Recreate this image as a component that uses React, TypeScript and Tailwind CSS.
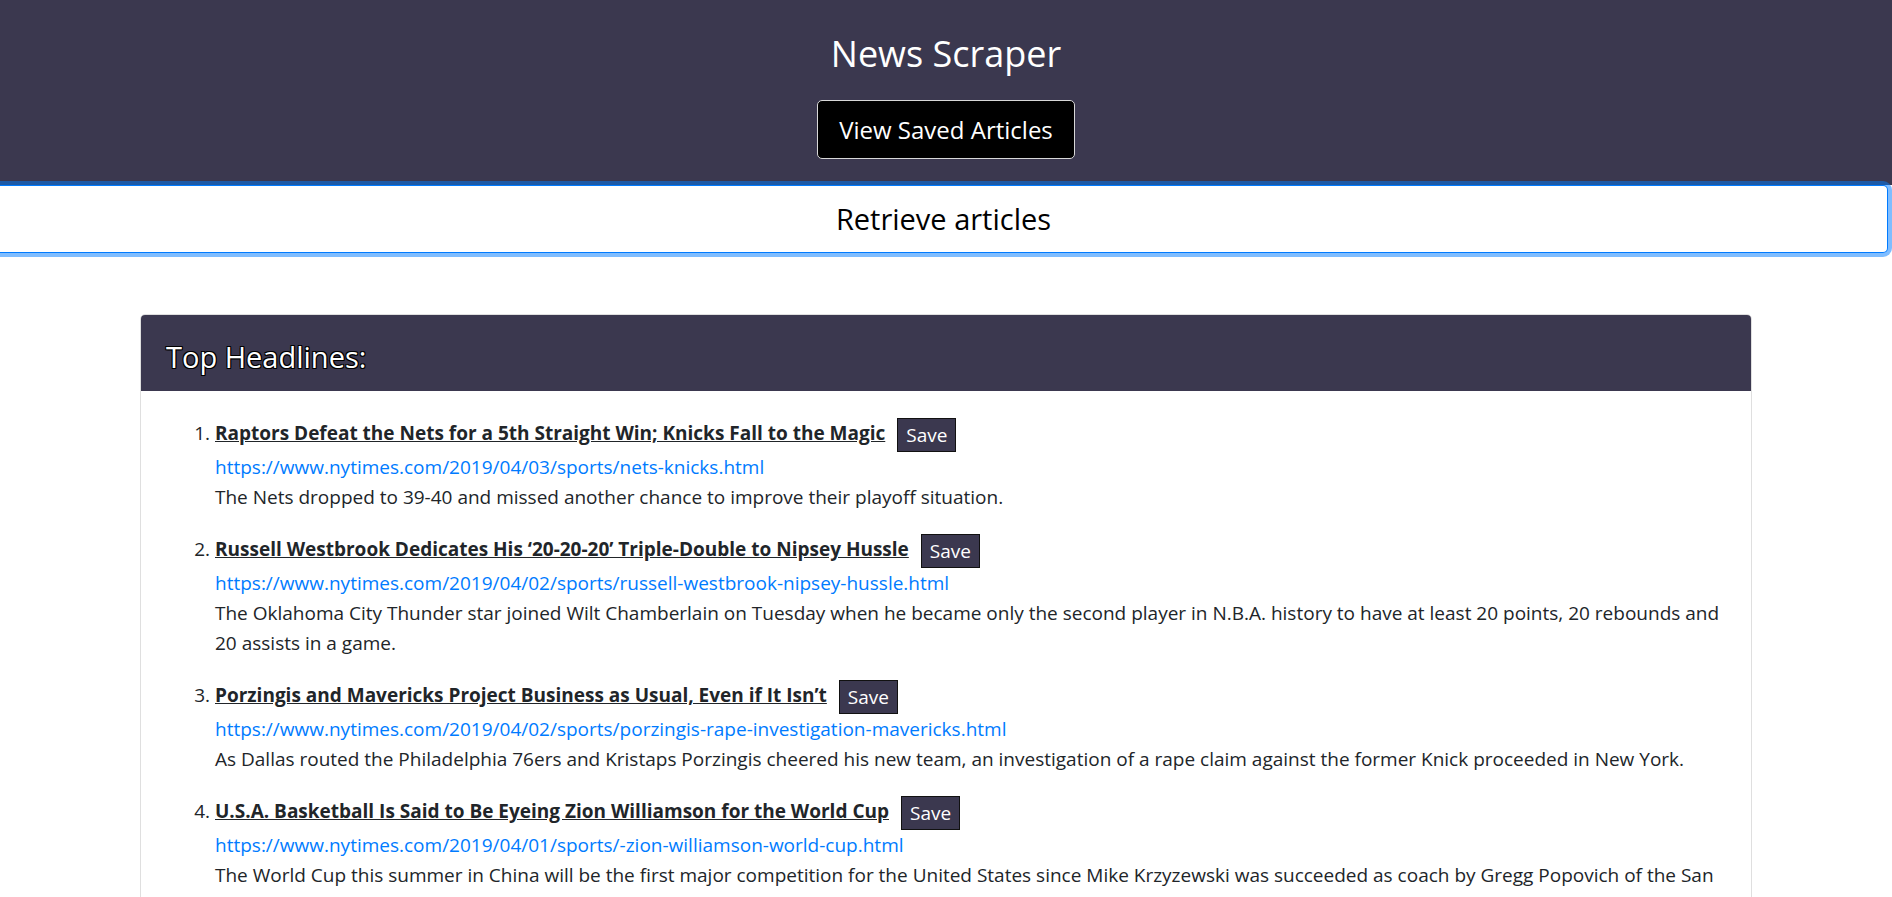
import React from "react";

const articles = [
  {
    title: "Raptors Defeat the Nets for a 5th Straight Win; Knicks Fall to the Magic",
    url: "https://www.nytimes.com/2019/04/03/sports/nets-knicks.html",
    desc: "The Nets dropped to 39-40 and missed another chance to improve their playoff situation.",
  },
  {
    title: "Russell Westbrook Dedicates His ‘20-20-20’ Triple-Double to Nipsey Hussle",
    url: "https://www.nytimes.com/2019/04/02/sports/russell-westbrook-nipsey-hussle.html",
    desc: "The Oklahoma City Thunder star joined Wilt Chamberlain on Tuesday when he became only the second player in N.B.A. history to have at least 20 points, 20 rebounds and 20 assists in a game.",
  },
  {
    title: "Porzingis and Mavericks Project Business as Usual, Even if It Isn’t",
    url: "https://www.nytimes.com/2019/04/02/sports/porzingis-rape-investigation-mavericks.html",
    desc: "As Dallas routed the Philadelphia 76ers and Kristaps Porzingis cheered his new team, an investigation of a rape claim against the former Knick proceeded in New York.",
  },
  {
    title: "U.S.A. Basketball Is Said to Be Eyeing Zion Williamson for the World Cup",
    url: "https://www.nytimes.com/2019/04/01/sports/-zion-williamson-world-cup.html",
    desc: "The World Cup this summer in China will be the first major competition for the United States since Mike Krzyzewski was succeeded as coach by Gregg Popovich of the San Antonio Spurs.",
  },
  {
    title: "Kevin Durant Is Making His Case, One Game at a Time",
    url: "https://www.nytimes.com/2019/04/01/sports/kevin-durant-warriors.html",
    desc: "The Warriors star has been at his best lately, and he knows it.",
  },
];

export default function App() {
  return (
    <div
      className="min-h-screen bg-white overflow-x-hidden text-[#212529]"
      style={{ fontFamily: '"Open Sans", "Noto Sans", sans-serif' }}
    >
      <header className="bg-[#3b384f] h-[185px] flex flex-col items-center pt-[29px]">
        <h1 className="text-white text-[36px] leading-[50px] font-normal">News Scraper</h1>
        <button className="mt-[21px] h-[59px] px-[21px] bg-black text-white text-[24px] border border-[#d8d8d8] rounded-[5px]">
          View Saved Articles
        </button>
      </header>

      <div className="pr-[4px]">
        <button className="w-full h-[68px] bg-white border-y border-r border-[#007bff] rounded-r-[5px] text-black text-[29px] flex items-center justify-center shadow-[0_0_0_4px_rgba(0,123,255,0.5)]">
          Retrieve articles
        </button>
      </div>

      <div className="w-[1612px] mx-auto mt-[61px] border border-[#dfdfdf] rounded-[5px] overflow-hidden">
        <div className="bg-[#3b384f] h-[76px] flex items-center px-[25px] pt-[6px]">
          <h3 className="text-white text-[29px] leading-none [text-shadow:1px_1px_0_#000,-1px_-1px_0_#000,1px_-1px_0_#000,-1px_1px_0_#000,0_1px_0_#000,1px_0_0_#000]">
            Top Headlines:
          </h3>
        </div>
        <div className="p-[25px]">
          <ol className="list-decimal pl-[49px] text-[19px] leading-[30px]">
            {articles.map((a, i) => (
              <li key={i} className="mb-[20px]">
                <div className="leading-[34px]">
                  <a href="#" className="font-bold underline text-[#212529]">
                    {a.title}
                  </a>
                  <button className="ml-[12px] h-[34px] px-[8px] bg-[#3b384f] text-white border border-[#111] align-middle leading-[30px]">
                    Save
                  </button>
                </div>
                <div>
                  <a href="#" className="text-[#007bff]">
                    {a.url}
                  </a>
                </div>
                <p>{a.desc}</p>
              </li>
            ))}
          </ol>
        </div>
      </div>
    </div>
  );
}
